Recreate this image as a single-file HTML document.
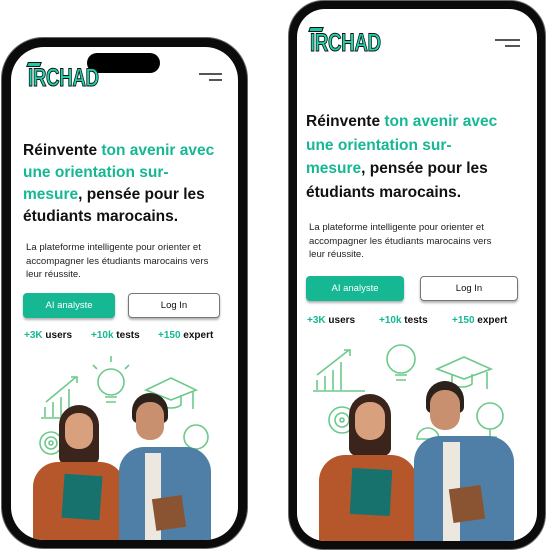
<!DOCTYPE html>
<html><head><meta charset="utf-8"><style>
*{margin:0;padding:0;box-sizing:border-box}
body{width:546px;height:550px;background:#fff;position:relative;overflow:hidden;font-family:"Liberation Sans",sans-serif}
.ph{position:absolute;background:#0b0b0b;border:1px solid #666;}
.sc{position:absolute;background:#fff;overflow:hidden}
.a{position:absolute;white-space:nowrap}
.logo{font-family:"Liberation Sans Narrow","Liberation Sans",sans-serif;font-weight:bold;color:#22d3ad;-webkit-text-stroke:1px #111;letter-spacing:-0.5px;transform:scaleX(0.75);transform-origin:left}
.h{font-weight:bold;color:#111;font-size:15.5px;line-height:22px}
.g{color:#16b894}
.p{font-size:9.6px;color:#222;line-height:13.5px}
.b1{background:#16b894;color:#fff;font-size:9.5px;text-align:center;border-radius:4px;box-shadow:0 2px 2px rgba(0,0,0,.3)}
.b2{background:#fff;color:#111;font-size:9.5px;text-align:center;border-radius:4px;border:1px solid #777;box-shadow:0 2px 2px rgba(0,0,0,.3)}
.st{font-size:10px;font-weight:bold;color:#111}
.hb{position:absolute;height:1.5px;background:#555}
.cap{position:absolute;width:14px;height:5px;background:#1fc9a6;border:1px solid #111;transform:skewX(-20deg)}
</style></head><body>

<!-- LEFT PHONE -->
<div class="ph" style="left:1px;top:37px;width:247px;height:512px;border-radius:42px"></div>
<div class="sc" style="left:11px;top:47px;width:227px;height:493px;border-radius:33px">
  <div style="position:absolute;left:76px;top:6px;width:73px;height:20px;background:#000;border-radius:10px"></div>
  <div class="cap" style="left:16px;top:15px"></div>
  <div class="a logo" style="left:17px;top:17px;font-size:25px">IRCHAD</div>
  <div class="hb" style="left:188px;top:26px;width:23px"></div>
  <div class="hb" style="left:198px;top:32px;width:13px"></div>
  <div class="a h" style="left:12px;top:93px">Réinvente <span class="g">ton avenir avec</span><br><span class="g">une orientation sur-</span><br><span class="g">mesure</span>, pensée pour les<br>étudiants marocains.</div>
  <div class="a p" style="left:15px;top:194px">La plateforme intelligente pour orienter et<br>accompagner les étudiants marocains vers<br>leur réussite.</div>
  <div class="a b1" style="left:12px;top:246px;width:92px;height:25px;line-height:25px">AI analyste</div>
  <div class="a b2" style="left:117px;top:246px;width:92px;height:25px;line-height:23px">Log In</div>
  <div class="a st" style="left:13px;top:283px"><span class="g">+3K</span> users</div>
  <div class="a st" style="left:80px;top:283px"><span class="g">+10k</span> tests</div>
  <div class="a st" style="left:147px;top:283px"><span class="g">+150</span> expert</div>
  <svg class="a" style="left:0;top:300px" width="227" height="193" viewBox="0 0 227 193" fill="none" stroke="#6cc98a" stroke-width="1.6">
    <path d="M30 71h50M34 70v-10M42 70v-15M50 70v-20M58 70v-28M35 55l30-25M60 30h6v6"/>
    <circle cx="100" cy="35" r="13"/><path d="M94 50h12M95 55h10M100 15v-6M86 22l-4-4M114 22l4-4"/>
    <path d="M135 43l25-12 25 12-25 10z M150 48v10c5 4 15 4 20 0v-10M182 45v17"/>
    <circle cx="40" cy="96" r="11"/><circle cx="40" cy="96" r="6"/><circle cx="40" cy="96" r="2"/>
    <circle cx="185" cy="90" r="12"/><path d="M185 102v8M178 110h14"/>
    <path d="M115 115a10 10 0 0 1 20 0z"/>
  </svg>
  <div class="a" style="left:48px;top:358px;width:40px;height:60px;background:#3a241b;border-radius:20px 20px 8px 8px"></div>
  <div class="a" style="left:54px;top:366px;width:28px;height:36px;background:#d9a07e;border-radius:13px"></div>
  <div class="a" style="left:22px;top:415px;width:92px;height:80px;background:#b5572a;border-radius:25px 25px 0 0"></div>
  <div class="a" style="left:52px;top:428px;width:38px;height:44px;background:#17716d;transform:rotate(4deg)"></div>
  <div class="a" style="left:121px;top:346px;width:36px;height:30px;background:#2d211c;border-radius:18px 18px 6px 6px"></div>
  <div class="a" style="left:125px;top:355px;width:28px;height:38px;background:#c99070;border-radius:13px"></div>
  <div class="a" style="left:108px;top:400px;width:92px;height:96px;background:#4f7fa6;border-radius:25px 25px 0 0"></div>
  <div class="a" style="left:134px;top:406px;width:16px;height:90px;background:#ece7df"></div>
  <div class="a" style="left:143px;top:450px;width:30px;height:32px;background:#8a5432;transform:rotate(-8deg)"></div>
</div>

<!-- RIGHT PHONE -->
<div class="ph" style="left:288px;top:0;width:258px;height:550px;border-radius:36px"></div>
<div class="sc" style="left:297px;top:9px;width:240px;height:532px;border-radius:28px">
  <div class="cap" style="left:12px;top:18px"></div>
  <div class="a logo" style="left:13px;top:20px;font-size:25px">IRCHAD</div>
  <div class="hb" style="left:198px;top:30px;width:25px"></div>
  <div class="hb" style="left:208px;top:36px;width:15px"></div>
  <div class="a h" style="left:9px;top:101px;line-height:23.5px">Réinvente <span class="g">ton avenir avec</span><br><span class="g">une orientation sur-</span><br><span class="g">mesure</span>, pensée pour les<br>étudiants marocains.</div>
  <div class="a p" style="left:12px;top:212px">La plateforme intelligente pour orienter et<br>accompagner les étudiants marocains vers<br>leur réussite.</div>
  <div class="a b1" style="left:9px;top:267px;width:98px;height:25px;line-height:25px">AI analyste</div>
  <div class="a b2" style="left:123px;top:267px;width:98px;height:25px;line-height:23px">Log In</div>
  <div class="a st" style="left:10px;top:306px"><span class="g">+3K</span> users</div>
  <div class="a st" style="left:82px;top:306px"><span class="g">+10k</span> tests</div>
  <div class="a st" style="left:155px;top:306px"><span class="g">+150</span> expert</div>
  <svg class="a" style="left:0;top:330px" width="240" height="202" viewBox="0 0 240 202" fill="none" stroke="#6cc98a" stroke-width="1.6">
    <path d="M16 52h52M20 51v-10M28 51v-14M36 51v-20M44 51v-28M20 36l32-25M47 11h6v6"/>
    <circle cx="104" cy="20" r="14"/><path d="M98 36h12M99 41h10M104 0v-4"/>
    <path d="M140 30l27-12 27 12-27 10z M155 35v10c5 4 15 4 20 0v-10M190 33v17"/>
    <circle cx="45" cy="81" r="13"/><circle cx="45" cy="81" r="7"/><circle cx="45" cy="81" r="2"/>
    <circle cx="193" cy="77" r="13"/><path d="M193 90v8M186 98h14"/>
    <path d="M120 100a11 11 0 0 1 22 0z"/>
  </svg>
  <div class="a" style="left:52px;top:385px;width:42px;height:62px;background:#3a241b;border-radius:21px 21px 8px 8px"></div>
  <div class="a" style="left:58px;top:393px;width:30px;height:38px;background:#d9a07e;border-radius:14px"></div>
  <div class="a" style="left:22px;top:446px;width:98px;height:86px;background:#b5572a;border-radius:26px 26px 0 0"></div>
  <div class="a" style="left:54px;top:460px;width:40px;height:46px;background:#17716d;transform:rotate(3deg)"></div>
  <div class="a" style="left:129px;top:372px;width:38px;height:32px;background:#2d211c;border-radius:19px 19px 6px 6px"></div>
  <div class="a" style="left:133px;top:381px;width:30px;height:40px;background:#c99070;border-radius:14px"></div>
  <div class="a" style="left:117px;top:427px;width:100px;height:105px;background:#4f7fa6;border-radius:26px 26px 0 0"></div>
  <div class="a" style="left:146px;top:433px;width:17px;height:99px;background:#ece7df"></div>
  <div class="a" style="left:154px;top:478px;width:32px;height:34px;background:#8a5432;transform:rotate(-8deg)"></div>
</div>
</body></html>
